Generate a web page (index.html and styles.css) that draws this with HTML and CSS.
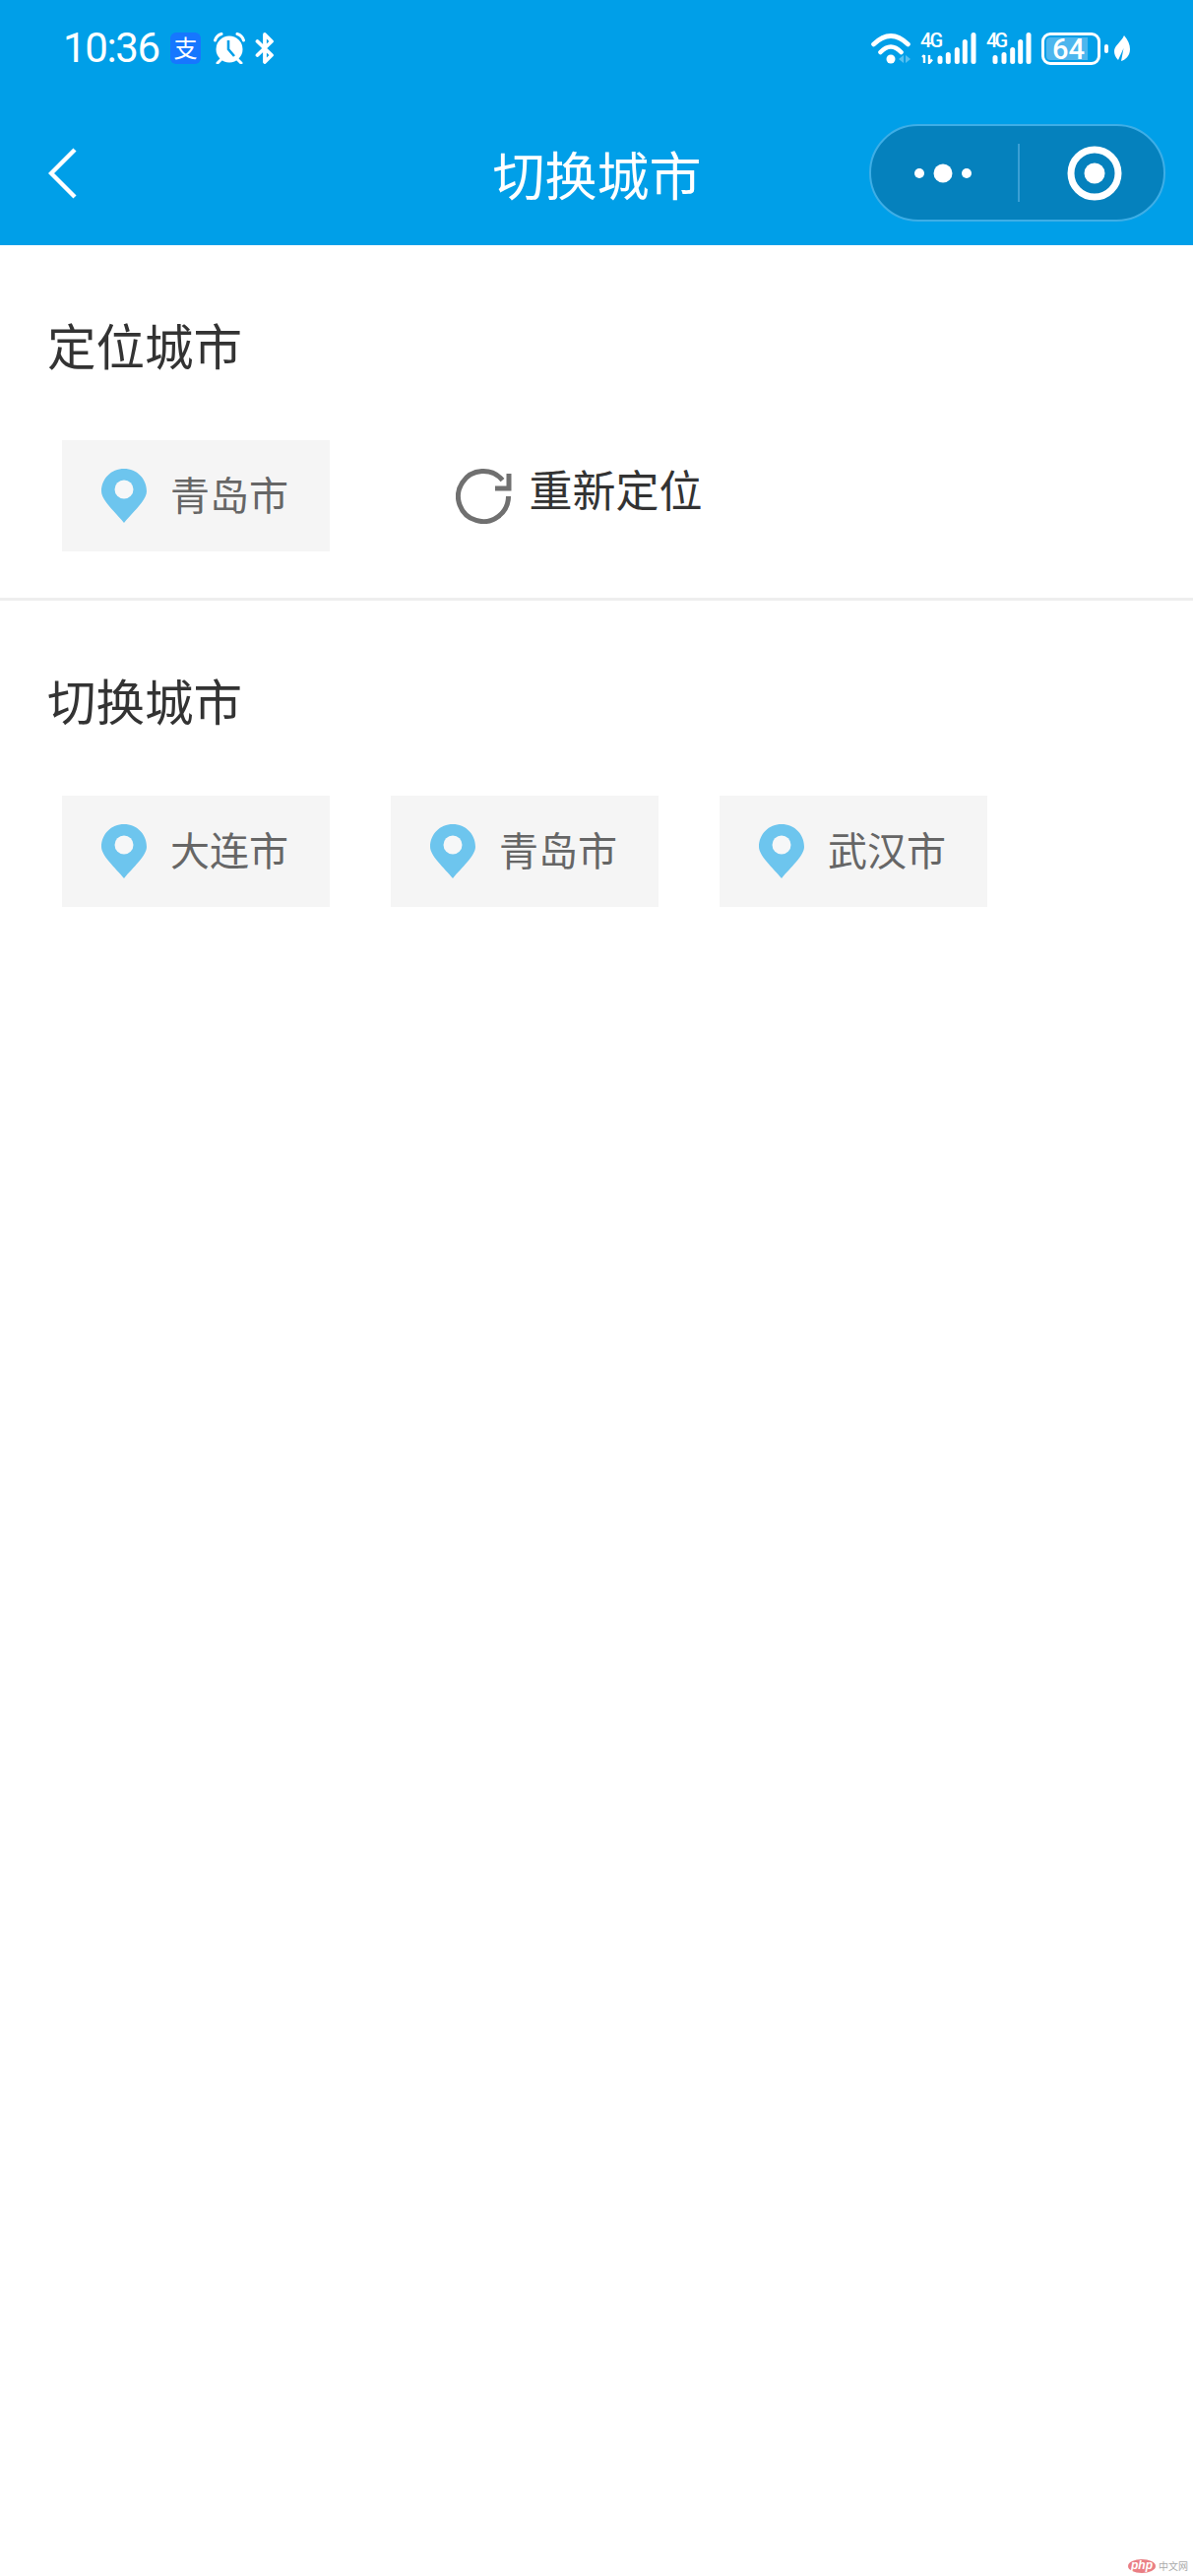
FILE: index.html
```html
<!DOCTYPE html>
<html lang="zh-CN">
<head>
    <meta charset="UTF-8">
    <meta name="viewport" content="width=device-width, initial-scale=1.0">
    <title>切换城市</title>
    <link rel="stylesheet" href="styles.css">
</head>
<body>
    <header class="header">
        <div class="status">
            <div class="status-left">
                <span class="time">10:36</span>
                <span class="alipay">支</span>
                <svg class="alarm" viewBox="0 0 32 32">
                    <circle cx="16" cy="17" r="13.5" fill="#fff"/>
                    <path d="M15 8V17L21 24" fill="none" stroke="#009fe8" stroke-width="2.6"/>
                    <path d="M1.5 8Q3 3 8 1.5M30.5 8Q29 3 24 1.5M4 31L8 27M28 31L24 27" fill="none" stroke="#fff" stroke-width="3" stroke-linecap="round"/>
                </svg>
                <svg class="bluetooth" viewBox="0 0 20 32">
                    <path d="M2.5 9L17 23L10 30V2L17 9L2.5 23" fill="none" stroke="#fff" stroke-width="3.8" stroke-linejoin="round" stroke-linecap="round"/>
                </svg>
            </div>
            <div class="status-right">
                <svg class="wifi" viewBox="0 0 40 32">
                    <path d="M2.5 12Q20 -5 37.5 12M9.5 20Q20 9 30.5 20" fill="none" stroke="#fff" stroke-width="4.6" stroke-linecap="round"/>
                    <circle cx="20" cy="27" r="4.5" fill="#fff"/>
                    <path d="M33 23V31L28 27ZM35 23V31L40 27Z" fill="#fff" opacity=".35"/>
                </svg>
                <svg class="signal-a" viewBox="0 -6 57 38">
                    <text class="net" x="0" y="15" textLength="23">4G</text>
                    <path d="M4 23V31M2 25L4 23M9 23V31L12 27.5" fill="none" stroke="#fff" stroke-width="2.4"/>
                    <rect x="17.5" y="23.5" width="5" height="8.5" rx="2.5"/>
                    <rect x="25.8" y="20" width="5" height="12" rx="2.5"/>
                    <rect x="34.8" y="15" width="5" height="17" rx="2.5"/>
                    <rect x="42.8" y="7" width="5" height="25" rx="2.5"/>
                    <rect x="51.5" y="0" width="5" height="32" rx="2.5"/>
                </svg>
                <svg class="signal-b" viewBox="0 -6 46 38">
                    <text class="net" x="0" y="15" textLength="22">4G</text>
                    <rect x="6.5" y="23" width="5" height="9" rx="2.5"/>
                    <rect x="15.5" y="20" width="5" height="12" rx="2.5"/>
                    <rect x="24.2" y="15" width="5" height="17" rx="2.5"/>
                    <rect x="32.2" y="7" width="5" height="25" rx="2.5"/>
                    <rect x="40.5" y="0" width="5" height="32" rx="2.5"/>
                </svg>
                <div class="battery"><span class="battery-level">64</span></div>
                <span class="battery-nub"></span>
                <svg class="leaf" viewBox="0 0 16 27">
                    <path d="M10 0C14 5 16 9 16 14C16 21 11 25 7 26L9.5 13L4 25C1 22 0 19 0 16C0 10 7 7 10 0Z" fill="#fff"/>
                </svg>
            </div>
        </div>
        <nav class="nav">
            <svg class="back" viewBox="0 0 30 54">
                <path d="M27 3L3 27L27 51" fill="none" stroke="#fff" stroke-width="4.4"/>
            </svg>
            <h1 class="nav-title">切换城市</h1>
            <div class="capsule">
                <svg class="more" viewBox="0 0 60 20">
                    <circle cx="6" cy="10" r="5" fill="#fff"/>
                    <circle cx="30" cy="10" r="9.5" fill="#fff"/>
                    <circle cx="54" cy="10" r="5" fill="#fff"/>
                </svg>
                <span class="capsule-line"></span>
                <svg class="target" viewBox="0 0 56 56">
                    <circle cx="28" cy="28" r="24" fill="none" stroke="#fff" stroke-width="7"/>
                    <circle cx="28" cy="28" r="10.5" fill="#fff"/>
                </svg>
            </div>
        </nav>
    </header>

    <section class="section">
        <h2 class="section-title">定位城市</h2>
        <div class="chips">
            <div class="chip">
                <svg class="pin" viewBox="0 0 46 55"><path d="M23 0C10 0 0 10 0 23C0 32 14 44 23 55C32 44 46 32 46 23C46 10 36 0 23 0Z" fill="#6dc5ee"/><circle cx="23" cy="21" r="9.5" fill="#f6f7f8"/></svg>
                <span class="chip-name">青岛市</span>
            </div>
            <div class="relocate">
                <svg class="refresh" viewBox="0 0 58 56">
                    <path d="M53.5 28A25.5 25.5 0 1 1 47.5 11.6M54 5V20H40" fill="none" stroke="#707070" stroke-width="5"/>
                </svg>
                <span class="relocate-text">重新定位</span>
            </div>
        </div>
    </section>

    <section class="section">
        <h2 class="section-title">切换城市</h2>
        <div class="chips">
            <div class="chip">
                <svg class="pin" viewBox="0 0 46 55"><path d="M23 0C10 0 0 10 0 23C0 32 14 44 23 55C32 44 46 32 46 23C46 10 36 0 23 0Z" fill="#6dc5ee"/><circle cx="23" cy="21" r="9.5" fill="#f6f7f8"/></svg>
                <span class="chip-name">大连市</span>
            </div>
            <div class="chip">
                <svg class="pin" viewBox="0 0 46 55"><path d="M23 0C10 0 0 10 0 23C0 32 14 44 23 55C32 44 46 32 46 23C46 10 36 0 23 0Z" fill="#6dc5ee"/><circle cx="23" cy="21" r="9.5" fill="#f6f7f8"/></svg>
                <span class="chip-name">青岛市</span>
            </div>
            <div class="chip">
                <svg class="pin" viewBox="0 0 46 55"><path d="M23 0C10 0 0 10 0 23C0 32 14 44 23 55C32 44 46 32 46 23C46 10 36 0 23 0Z" fill="#6dc5ee"/><circle cx="23" cy="21" r="9.5" fill="#f6f7f8"/></svg>
                <span class="chip-name">武汉市</span>
            </div>
        </div>
    </section>

    <div class="watermark">
        <span class="watermark-php">php</span>
        <span class="watermark-text">中文网</span>
    </div>
</body>
</html>
```

FILE: styles.css
```css
html, body {
    margin: 0;
    padding: 0;
}
body {
    position: relative;
    width: 1212px;
    height: 2616px;
    overflow: hidden;
    background: #fff;
    font-family: "Noto Sans CJK SC", "Noto Sans", sans-serif;
}
.header {
    background-color: #009fe8;
    color: #fff;
}
.status {
    height: 98px;
    display: flex;
    justify-content: space-between;
    align-items: center;
}
.status-left {
    display: flex;
    align-items: center;
    padding-left: 64px;
}
.status-right {
    display: flex;
    align-items: center;
    padding-right: 64px;
}
.time {
    font-family: Roboto, sans-serif;
    font-size: 42px;
    font-weight: 400;
    line-height: 42px;
    letter-spacing: -1.4px;
    width: 109px;
}
.alipay {
    width: 31px;
    height: 32px;
    border-radius: 6px;
    background: #1677ff;
    font-size: 24px;
    line-height: 30px;
    text-align: center;
}
.alarm {
    width: 32px;
    height: 32px;
    margin-left: 13px;
}
.bluetooth {
    width: 20px;
    height: 32px;
    margin-left: 10px;
}
.wifi {
    width: 40px;
    height: 32px;
}
.signal-a {
    width: 57px;
    height: 38px;
    margin: -6px 0 0 10px;
    fill: #fff;
}
.signal-b {
    width: 46px;
    height: 38px;
    margin: -6px 0 0 10px;
    fill: #fff;
}
.net {
    font-family: Roboto, sans-serif;
    font-size: 20px;
    font-weight: 500;
}
.battery {
    box-sizing: border-box;
    width: 60px;
    height: 33px;
    margin-left: 10px;
    border: 3px solid #fff;
    border-radius: 9px;
    padding: 2px;
    display: flex;
}
.battery-level {
    width: 42px;
    background: #4db6ee;
    border-radius: 4px 0 0 4px;
    font-family: Roboto, sans-serif;
    font-size: 29px;
    font-weight: 500;
    line-height: 25px;
    text-indent: 6px;
}
.battery-nub {
    width: 4px;
    height: 9px;
    margin-left: 4px;
    background: #fff;
    border-radius: 2px;
}
.leaf {
    width: 16px;
    height: 27px;
    margin-left: 6px;
}
.nav {
    display: grid;
    grid-template-columns: 1fr auto 1fr;
    align-items: center;
    padding: 28px 28px 24px 49px;
    height: 99px;
}
.back {
    width: 30px;
    height: 54px;
}
.nav-title {
    margin: 0;
    font-size: 53px;
    font-weight: 400;
    line-height: 60px;
    position: relative;
    left: -10px;
}
.capsule {
    box-sizing: border-box;
    justify-self: end;
    width: 301px;
    height: 99px;
    display: flex;
    align-items: center;
    border: 2px solid #3eaee6;
    border-radius: 50px;
    background: #0581bd;
}
.more {
    width: 60px;
    height: 20px;
    margin-left: 43px;
}
.capsule-line {
    width: 2px;
    height: 59px;
    margin-left: 46px;
    background: #3a9fd4;
}
.target {
    width: 56px;
    height: 56px;
    margin-left: 48px;
}
.section {
    padding: 71px 0 47px 48px;
    border-bottom: 3px solid #eee;
}
.section:last-of-type {
    border-bottom: none;
}
.section-title {
    margin: 0 0 67px;
    font-size: 49.5px;
    font-weight: 400;
    line-height: 60px;
    color: #333;
}
.chips {
    display: flex;
    gap: 62.5px;
    padding-left: 15px;
}
.chip {
    box-sizing: border-box;
    width: 271.5px;
    height: 113px;
    display: flex;
    align-items: center;
    padding-left: 40px;
    background: #f5f5f5;
}
.pin {
    width: 46px;
    height: 55px;
    flex: none;
}
.chip-name {
    margin: 0 0 6px 24px;
    font-size: 40px;
    line-height: 48px;
    color: #666;
}
.relocate {
    display: flex;
    align-items: center;
    margin-left: 65.5px;
}
.refresh {
    width: 58px;
    height: 56px;
}
.relocate-text {
    margin-left: 17px;
    padding-bottom: 16px;
    font-size: 44px;
    line-height: 52px;
    color: #333;
}
.watermark {
    position: absolute;
    right: 5px;
    bottom: 3px;
    display: flex;
    align-items: center;
}
.watermark-php {
    width: 28px;
    height: 14px;
    border-radius: 50%;
    background: #ea7f85;
    color: #fff;
    font-family: "Liberation Sans", sans-serif;
    font-size: 12px;
    font-style: italic;
    font-weight: 700;
    line-height: 13px;
    text-align: center;
}
.watermark-text {
    margin-left: 3px;
    font-size: 10px;
    line-height: 14px;
    color: #aaa;
}
```
